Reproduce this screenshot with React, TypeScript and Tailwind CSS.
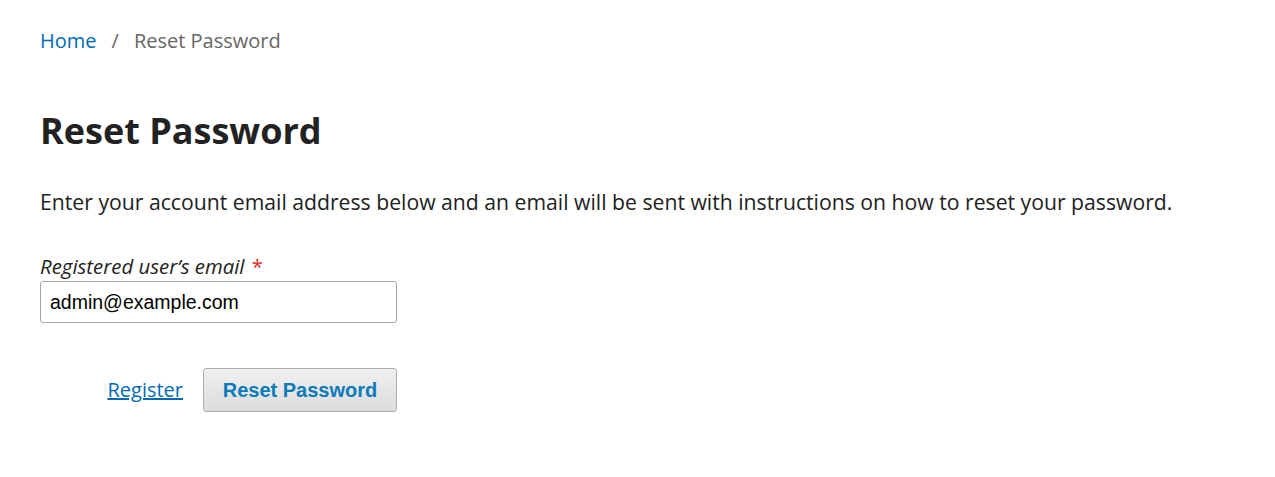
export default function App() {
  return (
    <div className="min-h-screen bg-white font-['Open_Sans',sans-serif] text-[#222]">
      <div className="px-10 pt-[26px]">
        <nav className="flex items-center text-[20px] leading-[30px]">
          <a href="#" className="text-[#006bb4]">Home</a>
          <span className="mx-[15px] text-[#666]">/</span>
          <span className="text-[#666]">Reset Password</span>
        </nav>

        <h1 className="mt-[53px] text-[36px] font-bold leading-[44px] text-[#222]">Reset Password</h1>

        <p className="mt-[33px] text-[21.2px] leading-[32px] text-[#222]">
          Enter your account email address below and an email will be sent with instructions on how to reset your password.
        </p>

        <div className="mt-[34px] w-[357px]">
          <label className="block text-[20.4px] italic leading-[28px] text-[#222]">
            Registered user’s email <span className="ml-[2px] not-italic text-[#e02b27]">*</span>
          </label>
          <input
            type="email"
            defaultValue="admin@example.com"
            className="mt-[1px] block h-[42px] w-full rounded-[3px] border border-[#a6a6a6] bg-white px-[9px] font-['Liberation_Sans',Arial,sans-serif] text-[19.5px] text-black outline-none"
          />
        </div>

        <div className="mt-[45px] flex w-[357px] items-center justify-end gap-[20px]">
          <a href="#" className="text-[20px] text-[#006bb4] underline">Register</a>
          <button className="h-[44px] w-[194px] rounded-[3px] border border-[#adadad] bg-gradient-to-b from-[#f0f0f0] to-[#dcdcdc] font-['Liberation_Sans',Arial,sans-serif] text-[20px] font-bold text-[#0a7bb8]">
            Reset Password
          </button>
        </div>
      </div>
    </div>
  );
}
